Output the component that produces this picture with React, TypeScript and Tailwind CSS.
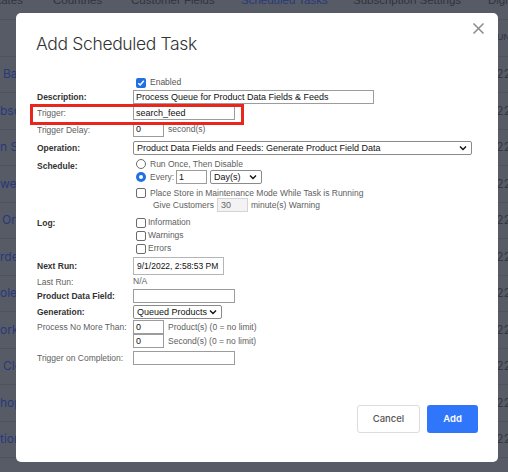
import React from "react";

const leftRows = ["Bas", "bsc", "n Se", "wen", "Orde", "rde", "ole E", "orkf", "Clea", "hopp", "tion"];
const leftPad = ["pl-[3px]", "pl-0", "pl-0", "pl-0", "pl-[2px]", "pl-0", "pl-0", "pl-0", "pl-[3px]", "pl-0", "pl-0"];

function Check({ checked = false }: { checked?: boolean }) {
  return checked ? (
    <span className="flex h-[10px] w-[10px] shrink-0 items-center justify-center rounded-[2px] bg-[#1f6fe5]">
      <svg width="8" height="8" viewBox="0 0 8 8">
        <path d="M1.3 4.2 L3.2 6 L6.8 1.8" fill="none" stroke="white" strokeWidth="1.5" />
      </svg>
    </span>
  ) : (
    <span className="block h-[10px] w-[10px] shrink-0 rounded-[2px] border border-[#6b6b6b] bg-white" />
  );
}

function Radio({ checked = false }: { checked?: boolean }) {
  return checked ? (
    <span className="flex h-[10px] w-[10px] shrink-0 items-center justify-center rounded-full bg-[#1f6fe5]">
      <span className="block h-[4px] w-[4px] rounded-full bg-white" />
    </span>
  ) : (
    <span className="block h-[10px] w-[10px] shrink-0 rounded-full border border-[#6b6b6b] bg-white" />
  );
}

function Chevron() {
  return (
    <svg width="8" height="6" viewBox="0 0 8 6" className="shrink-0">
      <path d="M1 1.5 L4 4.5 L7 1.5" fill="none" stroke="#111" strokeWidth="1.4" />
    </svg>
  );
}

export default function App() {
  const label = "w-[96px] shrink-0 whitespace-nowrap leading-[14px] text-[#5e5e5e]";
  const blabel = "w-[96px] shrink-0 whitespace-nowrap leading-[14px] font-bold text-[#333]";
  const input = "h-[14px] whitespace-nowrap border border-[#9c9c9c] bg-white px-[2px] text-[9px] leading-[12px] text-[#111]";
  const select = "flex h-[14px] items-center justify-between whitespace-nowrap rounded-[2px] border border-[#8a8a8a] bg-white pl-[3px] pr-[4px] text-[9px] leading-[12px] text-[#111]";
  return (
    <div className="relative h-[472px] w-[508px] overflow-hidden bg-[#575b66] font-['Liberation_Sans',Arial,sans-serif]">
      {/* background page under the overlay */}
      <div className="flex flex-col">
        <div className="h-[20px] overflow-hidden border-b border-[#4f535d]">
          <div className="-mt-[8px] flex whitespace-nowrap text-[11.5px] leading-[16px] text-[#30343d]">
            <span className="-ml-[2px] w-[55px] shrink-0">tates</span>
            <span className="w-[78px] shrink-0">Countries</span>
            <span className="w-[110px] shrink-0">Customer Fields</span>
            <span className="w-[112px] shrink-0 text-[#27397a]">Scheduled Tasks</span>
            <span className="w-[135px] shrink-0">Subscription Settings</span>
            <span className="shrink-0">Digi</span>
          </div>
        </div>
        <div className="flex h-[36.5px] items-center justify-end border-b border-[#4f535d] text-[9px] text-[#30343d]">
          <span className="-mr-[2px]">UN</span>
        </div>
        {leftRows.map((t, i) => (
          <div key={i} className="flex h-[36.5px] items-center justify-between border-b border-[#4f535d] font-['Inter',sans-serif] text-[12px]">
            <span className={`${leftPad[i]} text-[#27397a]`}>{t}</span>
            <span className="-mr-[3px] text-[#343841]">22</span>
          </div>
        ))}
      </div>

      {/* modal */}
      <div className="absolute left-[16px] top-[13px] flex h-[449px] w-[482px] flex-col rounded-[5px] bg-white">
        <div className="relative h-[64px]">
          <h2 className="pl-[20px] pt-[19px] font-['Inter',sans-serif] text-[17.5px] font-light leading-[24px] tracking-[-0.35px] text-[#333]">
            Add Scheduled Task
          </h2>
          <svg className="absolute right-[13px] top-[9px]" width="13" height="13" viewBox="0 0 13 13">
            <path d="M1.5 1.5 L11.5 11.5 M11.5 1.5 L1.5 11.5" stroke="#8a8a8a" strokeWidth="1.5" />
          </svg>
        </div>

        <div className="flex flex-col pl-[21px] text-[8.5px]">
          {/* Enabled */}
          <div className="flex h-[11px] items-center">
            <div className="w-[99px] shrink-0" />
            <Check checked />
            <span className="ml-[4px] text-[#555]">Enabled</span>
          </div>
          {/* Description */}
          <div className="mt-[2px] flex">
            <div className={blabel}>Description:</div>
            <div className={`${input} w-[241px]`}>Process Queue for Product Data Fields &amp; Feeds</div>
          </div>
          {/* Trigger */}
          <div className="relative mt-[2px] flex">
            <span className="absolute -left-[7px] -top-[2px] h-[21px] w-[214px] border-[3px] border-[#e8261e]" />
            <div className={label}>Trigger:</div>
            <div className={`${input} w-[102px] bg-[#e8f0fe]`}>search_feed</div>
          </div>
          {/* Trigger delay */}
          <div className="mt-[2px] flex items-center">
            <div className={label}>Trigger Delay:</div>
            <div className={`${input} h-[15px] w-[31px]`}>0</div>
            <span className="ml-[4px] text-[#5e5e5e]">second(s)</span>
          </div>
          {/* Operation */}
          <div className="mt-[4px] flex">
            <div className={blabel}>Operation:</div>
            <div className={`${select} w-[339px]`}>
              <span>Product Data Fields and Feeds: Generate Product Field Data</span>
              <Chevron />
            </div>
          </div>
          {/* Schedule */}
          <div className="mt-[4px] flex">
            <div className={`${blabel} leading-[12px]`}>Schedule:</div>
            <div className="flex flex-col">
              <div className="flex h-[10px] items-center pl-[3px]">
                <Radio />
                <span className="ml-[4px] text-[#5e5e5e]">Run Once, Then Disable</span>
              </div>
              <div className="mt-[1px] flex h-[14px] items-center pl-[3px]">
                <Radio checked />
                <span className="ml-[4px] text-[#5e5e5e]">Every:</span>
                <div className={`${input} ml-[2px] w-[31px]`}>1</div>
                <div className={`${select} ml-[3px] w-[52px]`}>
                  <span>Day(s)</span>
                  <Chevron />
                </div>
              </div>
              <div className="mt-[4px] flex h-[10px] items-center pl-[3px]">
                <Check />
                <span className="ml-[4px] text-[#5e5e5e]">Place Store in Maintenance Mode While Task is Running</span>
              </div>
              <div className="flex h-[14px] items-center pl-[20px]">
                <span className="text-[#5e5e5e]">Give Customers</span>
                <div className="ml-[3px] h-[14px] w-[31px] border border-[#d4d4d4] bg-[#f3f3f3] px-[3px] text-[9px] leading-[12px] text-[#666]">30</div>
                <span className="ml-[3px] text-[#5e5e5e]">minute(s) Warning</span>
              </div>
            </div>
          </div>
          {/* Log */}
          <div className="mt-[4px] flex">
            <div className={`${blabel} leading-[13px]`}>Log:</div>
            <div className="flex flex-col pl-[3px]">
              {["Information", "Warnings", "Errors"].map((t) => (
                <div key={t} className="flex h-[13px] items-center">
                  <Check />
                  <span className="ml-[2px] text-[#5e5e5e]">{t}</span>
                </div>
              ))}
            </div>
          </div>
          {/* Next run */}
          <div className="mt-[2px] flex items-center">
            <div className={blabel}>Next Run:</div>
            <div className="h-[18px] w-[91px] whitespace-nowrap border border-[#b5b5b5] bg-white px-[3px] text-[8.5px] leading-[16px] text-[#111]">
              9/1/2022, 2:58:53 PM
            </div>
          </div>
          {/* Last run */}
          <div className="flex h-[13px] items-center">
            <div className={`${label} leading-[13px]`}>Last Run:</div>
            <span className="text-[#5e5e5e]">N/A</span>
          </div>
          {/* Product data field */}
          <div className="mt-[1px] flex">
            <div className={blabel}>Product Data Field:</div>
            <div className={`${input} w-[102px]`} />
          </div>
          {/* Generation */}
          <div className="mt-[2px] flex">
            <div className={blabel}>Generation:</div>
            <div className={`${select} w-[89px]`}>
              <span>Queued Products</span>
              <Chevron />
            </div>
          </div>
          {/* Process */}
          <div className="mt-[1px] flex">
            <div className={label}>Process No More Than:</div>
            <div className="flex flex-col">
              <div className="flex items-center">
                <div className={`${input} w-[31px]`}>0</div>
                <span className="ml-[4px] text-[#5e5e5e]">Product(s) (0 = no limit)</span>
              </div>
              <div className="flex items-center">
                <div className={`${input} w-[31px]`}>0</div>
                <span className="ml-[4px] text-[#5e5e5e]">Second(s) (0 = no limit)</span>
              </div>
            </div>
          </div>
          {/* Trigger on completion */}
          <div className="mt-[3px] flex">
            <div className={label}>Trigger on Completion:</div>
            <div className={`${input} w-[102px]`} />
          </div>
        </div>

        <div className="mt-auto flex justify-end gap-[7px] pb-[29px] pr-[20px] font-['Inter',sans-serif] text-[9.5px] font-medium">
          <button className="h-[28px] w-[63px] rounded-[3px] border border-[#dcdcdc] bg-white text-[#555]">Cancel</button>
          <button className="h-[28px] w-[51px] rounded-[3px] bg-[#2f76fb] font-semibold text-white">Add</button>
        </div>
      </div>
    </div>
  );
}
